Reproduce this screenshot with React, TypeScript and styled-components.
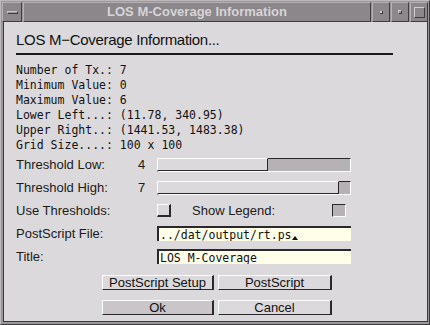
import styled, { createGlobalStyle } from "styled-components";

const GlobalStyle = createGlobalStyle`
  html, body {
    margin: 0;
    padding: 0;
    background: #9a969a;
  }
  body {
    font-family: "Liberation Sans", Arial, sans-serif;
  }
`;

const info = [
  "Number of Tx.: 7",
  "Minimum Value: 0",
  "Maximum Value: 6",
  "Lower Left...: (11.78, 340.95)",
  "Upper Right..: (1441.53, 1483.38)",
  "Grid Size....: 100 x 100",
];

const App = () => {
  return (
    <>
      <GlobalStyle />
      <Frame>
        <TitleBar>
          <WinButton $w={20}>
            <MenuBar />
          </WinButton>
          <TitleText>LOS M-Coverage Information</TitleText>
          <WinButton $w={18}>
            <MinDot />
          </WinButton>
          <WinButton $w={18}>
            <MaxDot />
          </WinButton>
          <WinButton $w={18}>
            <BigSquare />
          </WinButton>
        </TitleBar>
        <Body>
          <Heading>LOS M−Coverage Information...</Heading>
          <Rule />
          <InfoList>
            {info.map((line) => (
              <InfoLine key={line}>{line}</InfoLine>
            ))}
          </InfoList>
          <Form>
            <Row>
              <Label>Threshold Low:</Label>
              <Value>4</Value>
              <Trough>
                <Fill $w={111} />
              </Trough>
            </Row>
            <Row>
              <Label>Threshold High:</Label>
              <Value>7</Value>
              <Trough>
                <Fill $w={182} />
              </Trough>
            </Row>
            <Row>
              <Label>Use Thresholds:</Label>
              <Value />
              <CheckArea>
                <Check $on={false} />
                <InlineLabel>Show Legend:</InlineLabel>
                <Check $on={true} />
              </CheckArea>
            </Row>
            <Row>
              <Label>PostScript File:</Label>
              <Value />
              <TextField>
                ../dat/output/rt.ps
                <Caret />
              </TextField>
            </Row>
            <Row>
              <Label>Title:</Label>
              <Value />
              <TextField>LOS M-Coverage</TextField>
            </Row>
          </Form>
          <ButtonGrid>
            <Button>PostScript Setup</Button>
            <Button>PostScript</Button>
            <Button $default>Ok</Button>
            <Button>Cancel</Button>
          </ButtonGrid>
        </Body>
      </Frame>
    </>
  );
};

export default App;

const Frame = styled.div`
  width: 430px;
  height: 325px;
  box-sizing: border-box;
  background: #9a969a;
  border-top: 1px solid #bcb8bc;
  border-left: 1px solid #bcb8bc;
  border-right: 1px solid #3a383a;
  border-bottom: 1px solid #3a383a;
  padding: 1px 1px 2px 1px;
  display: flex;
  flex-direction: column;
`;

const TitleBar = styled.div`
  height: 20px;
  display: flex;
  gap: 1px;
  flex-shrink: 0;
`;

const WinButton = styled.div<{ $w: number }>`
  width: ${(p) => p.$w}px;
  box-sizing: border-box;
  background: #8b878b;
  border-top: 1px solid #b4b0b4;
  border-left: 1px solid #b4b0b4;
  border-right: 1px solid #3e3c3e;
  border-bottom: 1px solid #3e3c3e;
  display: flex;
  align-items: center;
  justify-content: center;
`;

const MenuBar = styled.div`
  width: 11px;
  height: 3px;
  box-sizing: border-box;
  background: #9a969a;
  border-top: 1px solid #c8c4c8;
  border-bottom: 1px solid #3e3c3e;
  border-left: 1px solid #c8c4c8;
  border-right: 1px solid #3e3c3e;
`;

const MinDot = styled.div`
  width: 2px;
  height: 2px;
  background: #d0ccd0;
  border-right: 1px solid #3e3c3e;
  border-bottom: 1px solid #3e3c3e;
`;

const MaxDot = styled.div`
  width: 4px;
  height: 4px;
  box-sizing: border-box;
  background: #9a969a;
  border-top: 1px solid #d0ccd0;
  border-left: 1px solid #d0ccd0;
  border-right: 1px solid #3e3c3e;
  border-bottom: 1px solid #3e3c3e;
`;

const BigSquare = styled.div`
  width: 11px;
  height: 11px;
  box-sizing: border-box;
  background: #8b878b;
  border-top: 1px solid #d0ccd0;
  border-left: 1px solid #d0ccd0;
  border-right: 1px solid #3e3c3e;
  border-bottom: 1px solid #3e3c3e;
`;

const TitleText = styled.div`
  flex: 1;
  box-sizing: border-box;
  background: #8b878b;
  border-top: 1px solid #b4b0b4;
  border-left: 1px solid #b4b0b4;
  border-right: 1px solid #3e3c3e;
  border-bottom: 1px solid #3e3c3e;
  color: #d8d4d8;
  font-weight: bold;
  font-size: 13px;
  line-height: 18px;
  text-align: center;
`;

const Body = styled.div`
  flex: 1;
  margin-left: 1px;
  background: #dcd9dc;
  border-left: 1px solid #3a383a;
  border-right: 1px solid #3a383a;
  border-bottom: 1px solid #3a383a;
  padding: 9px 12px 0 12px;
  display: flex;
  flex-direction: column;
`;

const Heading = styled.div`
  font-size: 15px;
  line-height: 18px;
  letter-spacing: -0.3px;
  color: #111;
`;

const Rule = styled.div`
  width: 377px;
  height: 2px;
  margin-top: 4px;
  background: #1a1a1a;
`;

const InfoList = styled.div`
  margin-top: 8px;
  display: flex;
  flex-direction: column;
`;

const InfoLine = styled.div`
  font-family: "DejaVu Sans Mono", "Liberation Mono", monospace;
  font-size: 11.5px;
  line-height: 15px;
  white-space: pre;
  color: #111;
`;

const Form = styled.div`
  display: flex;
  flex-direction: column;
`;

const Row = styled.div`
  height: 23px;
  display: grid;
  grid-template-columns: 122px 19px 194px;
  align-items: center;
`;

const Label = styled.div`
  font-size: 13px;
  color: #1a1a1a;
`;

const Value = styled.div`
  font-size: 13px;
  color: #1a1a1a;
`;

const InlineLabel = styled.div`
  font-size: 13px;
  color: #1a1a1a;
  margin-left: 21px;
  flex: 1;
`;

const Trough = styled.div`
  height: 14px;
  box-sizing: border-box;
  background: #b5b1b5;
  border-top: 1px solid #2a282a;
  border-left: 1px solid #2a282a;
  border-right: 1px solid #ffffff;
  border-bottom: 1px solid #ffffff;
  display: flex;
`;

const Fill = styled.div<{ $w: number }>`
  width: ${(p) => p.$w}px;
  margin-top: -1px;
  margin-left: -1px;
  box-sizing: border-box;
  background: #dcd9dc;
  border-top: 1px solid #ffffff;
  border-left: 1px solid #ffffff;
  border-right: 1px solid #2a282a;
  border-bottom: 1px solid #2a282a;
`;

const CheckArea = styled.div`
  width: 189px;
  display: flex;
  align-items: center;
`;

const Check = styled.div<{ $on: boolean }>`
  width: 14px;
  height: 13px;
  box-sizing: border-box;
  background: ${(p) => (p.$on ? "#b5b1b5" : "#dcd9dc")};
  border-style: solid;
  border-width: ${(p) => (p.$on ? "1px" : "1px 2px 2px 1px")};
  border-color: ${(p) =>
    p.$on
      ? "#2a282a #ffffff #ffffff #2a282a"
      : "#ffffff #2a282a #2a282a #ffffff"};
`;

const TextField = styled.div`
  height: 15px;
  box-sizing: border-box;
  background: #fffee8;
  border-top: 2px solid #2a282a;
  border-left: 2px solid #2a282a;
  padding-left: 1px;
  font-family: "DejaVu Sans Mono", "Liberation Mono", monospace;
  font-size: 11.5px;
  line-height: 12px;
  color: #111;
  white-space: pre;
  display: flex;
  align-items: flex-end;
  overflow: hidden;
`;

const Caret = styled.span`
  width: 0;
  height: 0;
  margin-bottom: 1px;
  border-left: 3px solid transparent;
  border-right: 3px solid transparent;
  border-bottom: 4px solid #111;
`;

const ButtonGrid = styled.div`
  margin-top: 7px;
  margin-left: 86px;
  display: grid;
  grid-template-columns: 112px 114px;
  column-gap: 4px;
  row-gap: 10px;
`;

const Button = styled.div<{ $default?: boolean }>`
  height: 15px;
  box-sizing: border-box;
  background: ${(p) => (p.$default ? "#c9c5c9" : "#dcd9dc")};
  border-top: 1px solid #ffffff;
  border-left: 1px solid #ffffff;
  border-right: 2px solid #2a282a;
  border-bottom: 1px solid #2a282a;
  font-size: 13px;
  line-height: 13px;
  text-align: center;
  color: #111;
`;
